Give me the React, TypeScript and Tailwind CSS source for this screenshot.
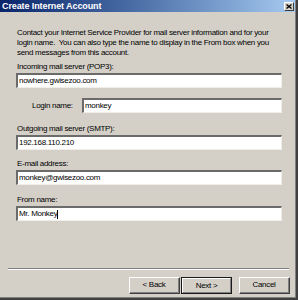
import React from 'react';

const font = { fontFamily: '"Liberation Sans", Arial, sans-serif' };

// sunken win2k-style text box
const Field: React.FC<{ value: string; caret?: boolean; className?: string }> = ({ value, caret, className = '' }) => (
  <div className={`h-[15px] border-t-2 border-l-2 border-t-[#6b6b6b] border-l-[#6b6b6b] border-b border-r border-b-[#f0eee8] border-r-[#f0eee8] bg-white flex items-center pl-[1px] text-[8px] leading-none text-black tracking-[-0.3px] ${className}`}>
    <span>{value}</span>
    {caret && <span className="w-px h-[9px] bg-black" />}
  </div>
);

const Btn: React.FC<{ label: string; def?: boolean; className?: string }> = ({ label, def, className = '' }) => (
  <div className={`h-[17px] w-[51px] flex items-center justify-center text-[8px] tracking-[-0.3px] text-black ${def ? 'border border-[#1a1a1a]' : 'border-b border-r border-b-[#404040] border-r-[#404040] border-t border-l border-t-white border-l-white'} ${className}`}>
    <div className={`w-full h-full flex items-center justify-center ${def ? 'border-t border-l border-t-white border-l-white border-b border-r border-b-[#808080] border-r-[#808080]' : 'border-b border-r border-b-[#808080] border-r-[#808080]'}`}>
      {label}
    </div>
  </div>
);

export default function App() {
  return (
    <div style={font} className="w-[298px] h-[300px] bg-[#d4d0c8] overflow-hidden relative">
      <div className="w-[298px] h-[300px] border-r-2 border-b-2 border-r-[#404040] border-b-[#404040]">
        <div className="w-full h-full border-r border-b border-r-[#808080] border-b-[#808080] flex flex-col">
          <div className="h-[12px] bg-gradient-to-r from-[#0a246a] to-[#a6caf0] flex items-center justify-between pl-[2px] pr-[1px]">
            <span className="text-white font-bold text-[9px] leading-none tracking-[-0.1px]">Create Internet Account</span>
            <div className="w-[10px] h-[9px] bg-[#d4d0c8] border-t border-l border-t-white border-l-white border-b border-r border-b-[#404040] border-r-[#404040] flex items-center justify-center">
              <svg width="6" height="5" viewBox="0 0 6 5">
                <path d="M0.5 0.5 L5.5 4.5 M5.5 0.5 L0.5 4.5" stroke="#000" strokeWidth="1.3" />
              </svg>
            </div>
          </div>

          <div className="pl-[17px] pr-[16px] mt-[16px] text-[8px] leading-[10px] tracking-[-0.3px] text-black">
            Contact your Internet Service Provider for mail server information and for your login name.&nbsp; You can also type the name to display in the From box when you send messages from this account.
          </div>

          <div className="pl-[16px] pr-[13px] text-[8px] leading-[10px] tracking-[-0.3px] text-black">
            <div className="mt-[4px] pl-px">Incoming mail server (POP3):</div>
            <Field className="mt-[1px]" value="nowhere.gwisezoo.com" />

            <div className="mt-[10px] flex items-center">
              <div className="w-[66px] pl-[16px]">Login name:</div>
              <Field className="flex-1" value="monkey" />
            </div>

            <div className="mt-[11px] pl-px">Outgoing mail server (SMTP):</div>
            <Field className="mt-[1px]" value="192.168.110.210" />

            <div className="mt-[9px] pl-px">E-mail address:</div>
            <Field className="mt-[1px]" value="monkey@gwisezoo.com" />

            <div className="mt-[10px] pl-px">From name:</div>
            <Field className="mt-[1px]" value="Mr. Monkey" caret />
          </div>

          <div className="mt-auto ml-[8px] mr-[6px] border-t border-t-[#808080] border-b border-b-white" />

          <div className="flex justify-end gap-px pr-[5px] mt-[7px] mb-[3px]">
            <Btn label="< Back" />
            <Btn label="Next >" def />
            <Btn label="Cancel" className="ml-[6px]" />
          </div>
        </div>
      </div>
    </div>
  );
}
